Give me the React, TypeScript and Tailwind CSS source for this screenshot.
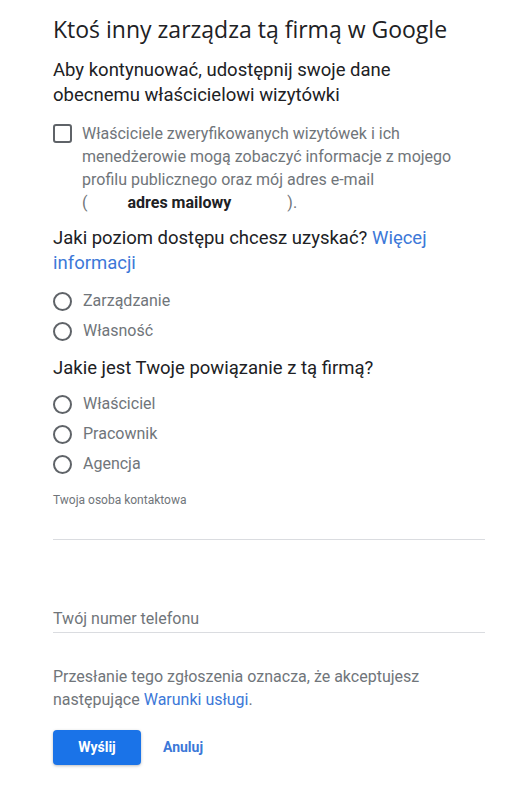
import { useState } from "react";

const font = { fontFamily: "Roboto, 'Noto Sans', sans-serif" };

function Radio({ label, checked, onClick }: { label: string; checked: boolean; onClick: () => void }) {
  return (
    <button type="button" onClick={onClick} className="flex h-[30px] items-center gap-[11px] text-left">
      <span className="flex h-[19px] w-[19px] items-center justify-center rounded-full border-2 border-[#5f6368]">
        {checked && <span className="h-[9px] w-[9px] rounded-full bg-[#1a73e8]" />}
      </span>
      <span className="text-[16px] text-[#70757a]">{label}</span>
    </button>
  );
}

export default function App() {
  const [access, setAccess] = useState("");
  const [relation, setRelation] = useState("");
  const [agree, setAgree] = useState(false);

  return (
    <div className="min-h-[792px] bg-white pl-[53px] pr-[44px] pt-[14px]" style={font}>
      <h1
        className="text-[23px] leading-[30px] text-[#202124]"
        style={{ fontFamily: "'Open Sans', Roboto, sans-serif" }}
      >
        Ktoś inny zarządza tą firmą w Google
      </h1>

      <p className="mt-[14px] text-[18.5px] leading-[25px] text-[#202124]">
        Aby kontynuować, udostępnij swoje dane
        <br />
        obecnemu właścicielowi wizytówki
      </p>

      {/* consent */}
      <div className="mt-[14px] flex gap-[10px]">
        <button
          type="button"
          onClick={() => setAgree(!agree)}
          className={`mt-[2px] h-[19px] w-[19px] shrink-0 rounded-[3px] border-2 ${
            agree ? "border-[#1a73e8] bg-[#1a73e8]" : "border-[#5f6368]"
          }`}
        />
        <p className="text-[16px] leading-[23px] text-[#70757a]">
          Właściciele zweryfikowanych wizytówek i ich menedżerowie mogą zobaczyć informacje z mojego
          profilu publicznego oraz mój adres e-mail
          <br />
          (<span className="ml-[40px] mr-[56px] font-bold text-[#202124]">adres mailowy</span>).
        </p>
      </div>

      <p className="mt-[12px] text-[18.5px] leading-[25px] text-[#202124]">
        Jaki poziom dostępu chcesz uzyskać? <a className="text-[#3c78d8]">Więcej informacji</a>
      </p>
      <div className="mt-[10px] flex flex-col">
        <Radio label="Zarządzanie" checked={access === "m"} onClick={() => setAccess("m")} />
        <Radio label="Własność" checked={access === "o"} onClick={() => setAccess("o")} />
      </div>

      <p className="mt-[10px] text-[18.5px] leading-[25px] text-[#202124]">Jakie jest Twoje powiązanie z tą firmą?</p>
      <div className="mt-[8px] flex flex-col">
        <Radio label="Właściciel" checked={relation === "w"} onClick={() => setRelation("w")} />
        <Radio label="Pracownik" checked={relation === "p"} onClick={() => setRelation("p")} />
        <Radio label="Agencja" checked={relation === "a"} onClick={() => setRelation("a")} />
      </div>

      {/* inputs */}
      <div className="mt-[13px] border-b border-[#dadce0] pb-[31px]">
        <div className="text-[12px] leading-[16px] text-[#70757a]">Twoja osoba kontaktowa</div>
      </div>
      <div className="mt-[69px] border-b border-[#dadce0] pb-[3px]">
        <div className="text-[16px] leading-[20px] text-[#70757a]">Twój numer telefonu</div>
      </div>

      <p className="mt-[32px] text-[16px] leading-[23px] text-[#70757a]">
        Przesłanie tego zgłoszenia oznacza, że akceptujesz
        <br />
        następujące <a className="text-[#3c78d8]">Warunki usługi</a>.
      </p>

      <div className="mt-[19px] flex items-center gap-[22px]">
        <button
          type="button"
          className="h-[35px] w-[88px] rounded-[4px] bg-[#1a73e8] text-[14px] font-bold text-white shadow-[0_1px_3px_rgba(60,64,67,0.35)]"
        >
          Wyślij
        </button>
        <button type="button" className="text-[14px] font-bold text-[#3c78d8]">
          Anuluj
        </button>
      </div>
    </div>
  );
}
